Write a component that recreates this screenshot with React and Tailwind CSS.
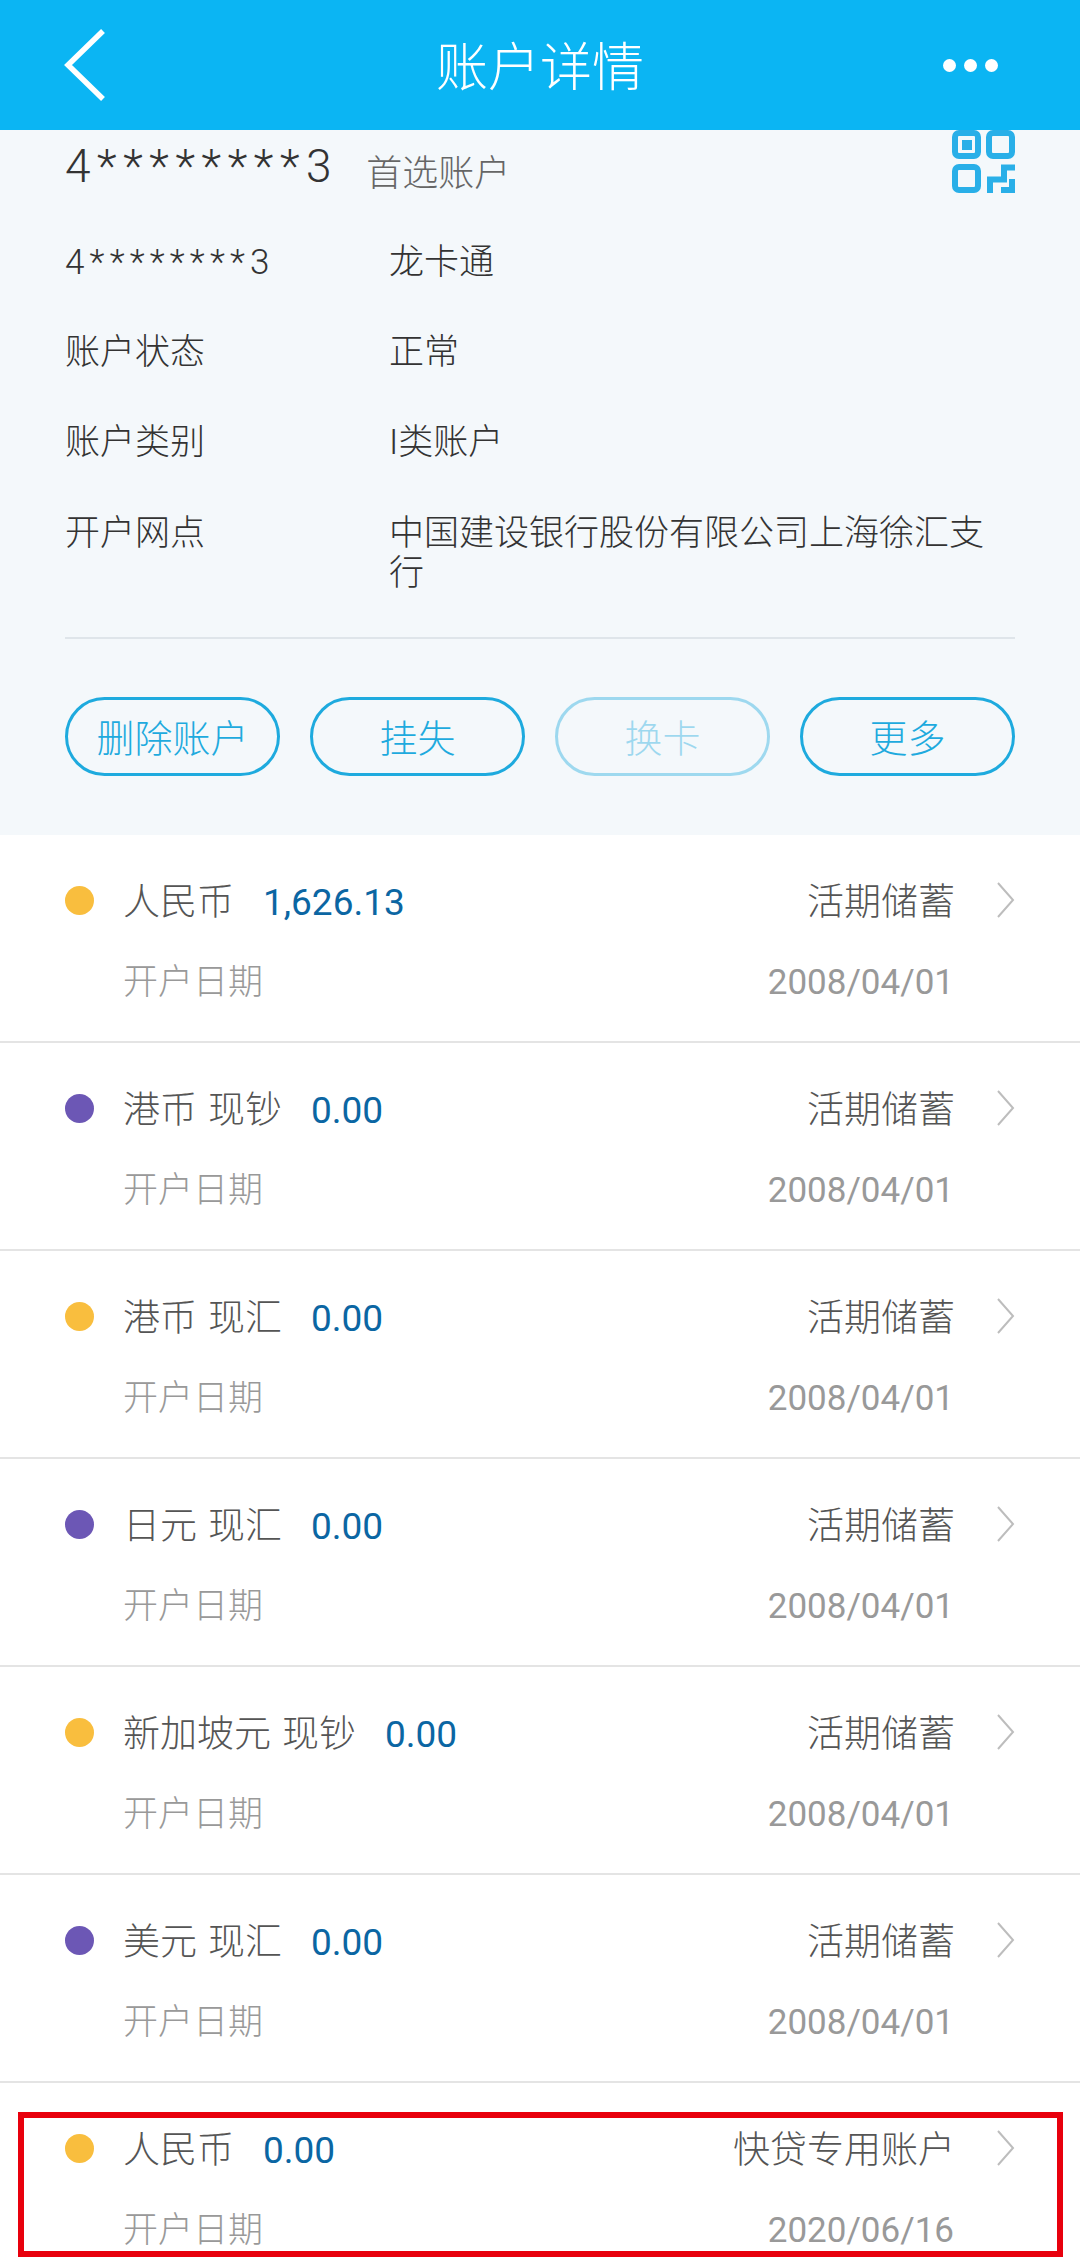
const accounts = [
  { name: '人民币', amount: '1,626.13', dot: 'bg-[#f9be3e]', type: '活期储蓄', date: '2008/04/01' },
  { name: '港币 现钞', amount: '0.00', dot: 'bg-[#6c57b5]', type: '活期储蓄', date: '2008/04/01' },
  { name: '港币 现汇', amount: '0.00', dot: 'bg-[#f9be3e]', type: '活期储蓄', date: '2008/04/01' },
  { name: '日元 现汇', amount: '0.00', dot: 'bg-[#6c57b5]', type: '活期储蓄', date: '2008/04/01' },
  { name: '新加坡元 现钞', amount: '0.00', dot: 'bg-[#f9be3e]', type: '活期储蓄', date: '2008/04/01' },
  { name: '美元 现汇', amount: '0.00', dot: 'bg-[#6c57b5]', type: '活期储蓄', date: '2008/04/01' },
  { name: '人民币', amount: '0.00', dot: 'bg-[#f9be3e]', type: '快贷专用账户', date: '2020/06/16' },
]

const details = [
  { label: '4********3', value: '龙卡通', tracking: 'tracking-[5.2px]' },
  { label: '账户状态', value: '正常' },
  { label: '账户类别', value: 'I类账户' },
]

const actions = [
  { label: '删除账户' },
  { label: '挂失' },
  { label: '换卡', disabled: true },
  { label: '更多' },
]

function QrIcon() {
  return (
    <svg viewBox="0 0 63 63" className="w-[63px] h-[63px]" fill="none" stroke="#29afe8" strokeWidth="6">
      <rect x="3" y="3" width="23" height="23" rx="4" />
      <rect x="37" y="3" width="23" height="23" rx="4" />
      <rect x="3" y="37" width="23" height="23" rx="4" />
      <rect x="10" y="10" width="10" height="10" fill="#29afe8" stroke="none" />
      <path d="M38 63V49.5H52V37.5H63" />
      <path d="M49 60H60V49" />
    </svg>
  )
}

function AccountRow({ account }) {
  return (
    <div className="h-[208px] border-b-2 border-[#e4e4e4] pl-[65px] pr-[65px] pt-[43px]">
      <div className="flex items-center h-[44px]">
        <span className={`w-[29px] h-[29px] rounded-full shrink-0 ${account.dot}`} />
        <span className="ml-[29px] mt-[6px] text-[37px] text-[#555] [word-spacing:2px]">{account.name}</span>
        <span className="ml-[29px] mt-[6px] text-[37px] text-[#0b66a3] font-normal">{account.amount}</span>
        <span className="ml-auto mt-[6px] text-[37px] text-[#555]">{account.type}</span>
        <svg viewBox="0 0 18 36" className="w-[18px] h-[36px] ml-[42px] shrink-0" fill="none" stroke="#bdbdbd" strokeWidth="2">
          <path d="M1 1L16 18L1 35" />
        </svg>
      </div>
      <div className="flex items-center justify-between h-[44px] mt-[39px] pl-[58px] pr-[61px]">
        <span className="text-[35px] text-[#999]">开户日期</span>
        <span className="text-[35px] text-[#999] font-normal">{account.date}</span>
      </div>
    </div>
  )
}

export default function App() {
  return (
    <div className="relative w-[1080px] h-[2262px] overflow-hidden bg-white font-light font-['Roboto','Noto_Sans_CJK_SC',sans-serif]">
      <header className="h-[130px] bg-[#0bb5f3] flex items-center px-[62px]">
        <div className="flex-1">
          <svg viewBox="0 0 44 74" className="w-[44px] h-[74px]" fill="none" stroke="#fff" strokeWidth="5.5">
            <path d="M41 3L6 37L41 71" />
          </svg>
        </div>
        <h1 className="pt-[8px] text-[52px] text-white leading-none font-light">账户详情</h1>
        <div className="flex-1 flex justify-end">
          <div className="flex gap-[8px] mr-[20px]">
            <span className="w-[13px] h-[13px] rounded-full bg-white" />
            <span className="w-[13px] h-[13px] rounded-full bg-white" />
            <span className="w-[13px] h-[13px] rounded-full bg-white" />
          </div>
        </div>
      </header>

      <section className="h-[705px] bg-[#f4f8fb] px-[65px]">
        <div className="flex items-start h-[85px]">
          <span className="mt-[6px] text-[46px] leading-[60px] text-[#333] tracking-[6.6px]">4********3</span>
          <span className="ml-[28px] mt-[18px] text-[36px] leading-[52px] text-[#666]">首选账户</span>
          <span className="ml-auto"><QrIcon /></span>
        </div>
        {details.map((row) => (
          <div key={row.label} className="flex items-center h-[90px] pt-[7px]">
            <span className={`w-[324px] text-[35px] text-[#333] ${row.tracking || ''}`}>{row.label}</span>
            <span className="text-[35px] text-[#333]">{row.value}</span>
          </div>
        ))}
        <div className="flex items-start pt-[29px] pb-[43px] border-b-2 border-[#dfe5ea]">
          <span className="w-[324px] shrink-0 text-[35px] leading-[40px] text-[#333]">开户网点</span>
          <span className="text-[35px] leading-[40px] text-[#333]">中国建设银行股份有限公司上海徐汇支行</span>
        </div>
        <div className="flex justify-between mt-[58px]">
          {actions.map((action) => (
            <button
              key={action.label}
              type="button"
              className={`w-[215px] h-[79px] pt-[5px] rounded-full border-[3px] border-[#1eaade] text-[38px] text-[#1eaade] flex items-center justify-center ${action.disabled ? 'opacity-40' : ''}`}
            >
              {action.label}
            </button>
          ))}
        </div>
      </section>

      <div>
        {accounts.map((account, i) => (
          <AccountRow key={i} account={account} />
        ))}
      </div>

      {/* red annotation box drawn over the last row */}
      <div className="absolute left-[18px] top-[2112px] w-[1045px] h-[145px] border-[6px] border-[#e8000d]" />
    </div>
  )
}
